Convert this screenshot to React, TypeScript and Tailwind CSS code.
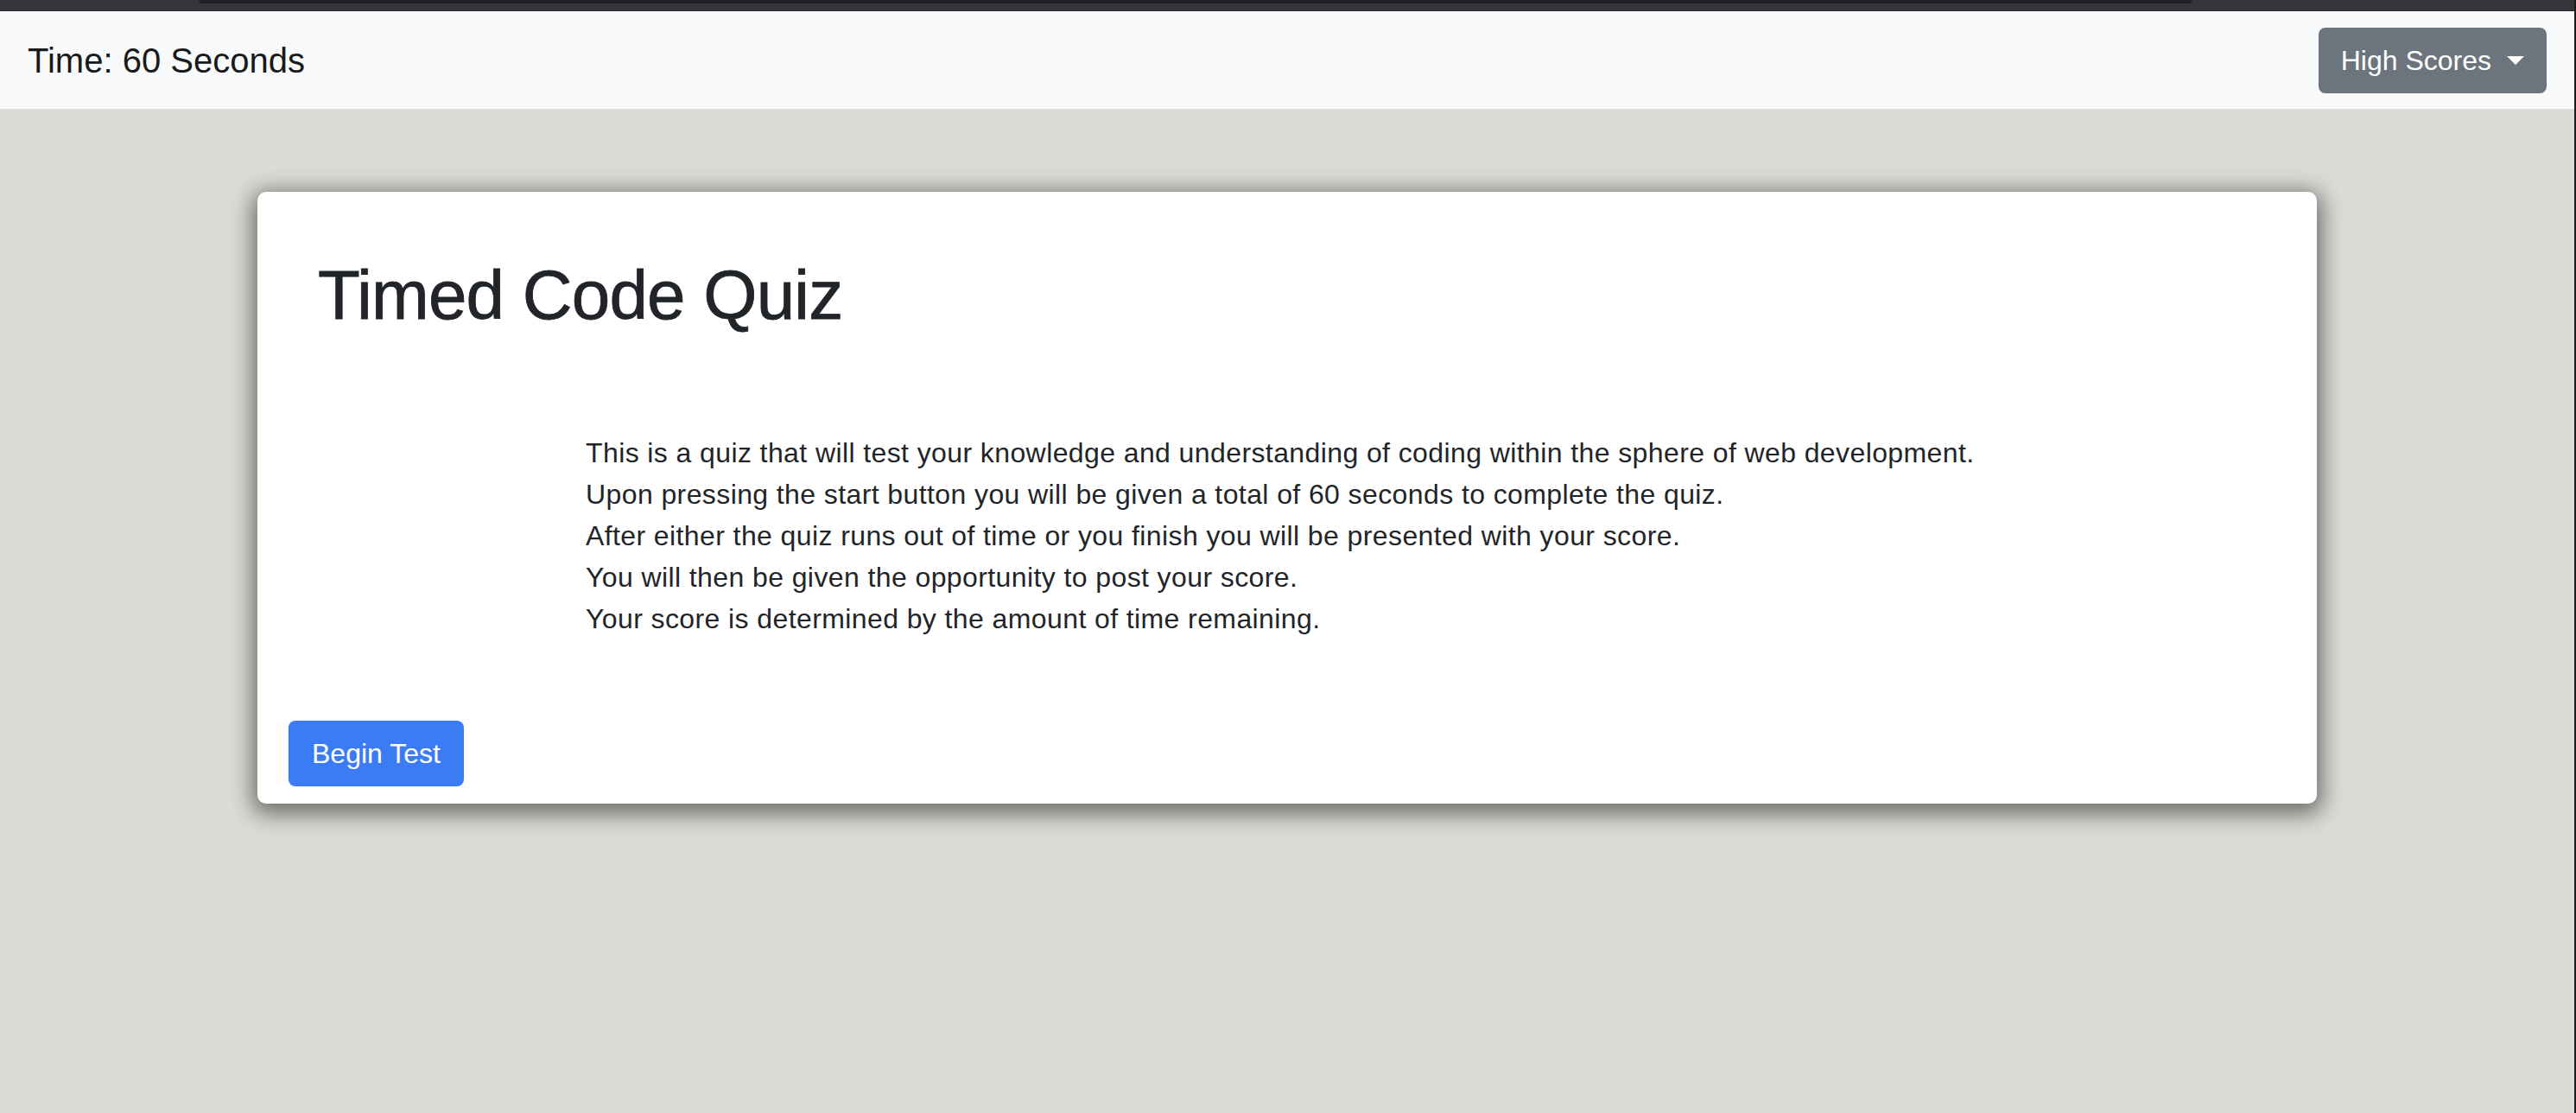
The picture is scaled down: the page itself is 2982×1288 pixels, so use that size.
export default function App() {
  return (
    <div className="min-h-screen flex bg-[#dadcd5] font-['Liberation_Sans',Arial,sans-serif] text-[#212529]">
      <div className="flex-1 flex flex-col">
        {/* browser chrome strip */}
        <div className="h-[13px] bg-[#35363a] border-b border-[#27282b] flex">
          <div className="ml-[230px] mr-[442px] flex-1 h-[4px] bg-[#202124] rounded-b-[12px]" />
        </div>

        {/* navbar */}
        <nav className="h-[113px] bg-[#f8f9fa] flex items-center justify-between px-[32px]">
          <span className="text-[40px] leading-[60px] text-[#1a1a1a]">Time: 60 Seconds</span>
          <button
            type="button"
            className="h-[76px] px-[26px] rounded-[8px] bg-[#6c757d] text-white text-[32px] flex items-center gap-[18px]"
          >
            High Scores
            <span className="w-0 h-0 border-t-[10px] border-t-white border-x-[10px] border-x-transparent" />
          </button>
        </nav>

        {/* quiz card */}
        <main className="pt-[96px]">
          <div className="w-4/5 mx-auto bg-white rounded-[10px] shadow-[0_6px_26px_6px_rgba(0,0,0,0.5)] pt-[72px] pb-[20px]">
            <h1 className="pl-[70px] text-[80px] leading-[96px] font-medium tracking-[-0.8px] [-webkit-text-stroke:0.8px_#212529]">
              Timed Code Quiz
            </h1>
            <div className="mt-[110px] pl-[380px] text-[32px] leading-[48px] tracking-[0.4px]">
              <p>This is a quiz that will test your knowledge and understanding of coding within the sphere of web development.</p>
              <p>Upon pressing the start button you will be given a total of 60 seconds to complete the quiz.</p>
              <p>After either the quiz runs out of time or you finish you will be presented with your score.</p>
              <p>You will then be given the opportunity to post your score.</p>
              <p>Your score is determined by the amount of time remaining.</p>
            </div>
            <button
              type="button"
              className="mt-[94px] ml-[36px] h-[76px] px-[27px] rounded-[8px] bg-[#3b7cf6] text-white text-[32px]"
            >
              Begin Test
            </button>
          </div>
        </main>
      </div>
      <div className="w-[2px] bg-[#1c1c1e]" />
    </div>
  );
}
